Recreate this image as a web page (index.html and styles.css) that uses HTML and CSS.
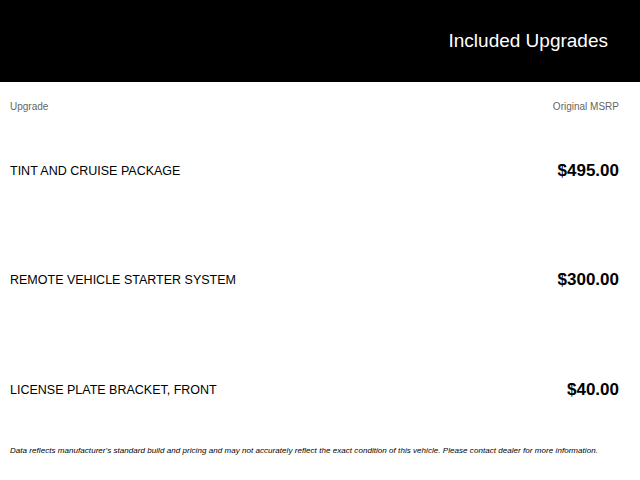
FILE: index.html
```html
<!DOCTYPE html>
<html>
<head>
<meta charset="utf-8">
<link rel="stylesheet" href="styles.css">
</head>
<body>
<header class="hero">
  <h1 class="hero-title">Included Upgrades</h1>
</header>
<main class="upgrades">
  <div class="col-head">
    <span>Upgrade</span>
    <span>Original MSRP</span>
  </div>
  <div class="row">
    <span class="name">TINT AND CRUISE PACKAGE</span>
    <span class="price">$495.00</span>
  </div>
  <div class="row">
    <span class="name">REMOTE VEHICLE STARTER SYSTEM</span>
    <span class="price">$300.00</span>
  </div>
  <div class="row">
    <span class="name">LICENSE PLATE BRACKET, FRONT</span>
    <span class="price">$40.00</span>
  </div>
  <p class="note">Data reflects manufacturer's standard build and pricing and may not accurately reflect the exact condition of this vehicle. Please contact dealer for more information.</p>
</main>
</body>
</html>
```
FILE: styles.css
```css
html, body {
  margin: 0;
  padding: 0;
  background: #fff;
  font-family: "Liberation Sans", Arial, sans-serif;
  color: #000;
}
.hero {
  background: #000;
  height: 82px;
  display: flex;
  align-items: center;
  justify-content: flex-end;
  padding-right: 32px;
}
.hero-title {
  margin: 0;
  color: #fff;
  font-weight: normal;
  font-size: 19px;
}
.upgrades {
  padding: 0 21px 0 10px;
}
.col-head {
  height: 34px;
  display: flex;
  align-items: center;
  justify-content: space-between;
  font-size: 10px;
  color: #666;
  padding-top: 14px;
  box-sizing: border-box;
}
.row {
  height: 109.5px;
  display: flex;
  align-items: center;
  justify-content: space-between;
}
.name {
  font-size: 12.5px;
}
.price {
  font-size: 17px;
  font-weight: bold;
}
.note {
  margin: 0;
  font-size: 8px;
  letter-spacing: 0.05px;
  font-style: italic;
  line-height: 11px;
}
```
